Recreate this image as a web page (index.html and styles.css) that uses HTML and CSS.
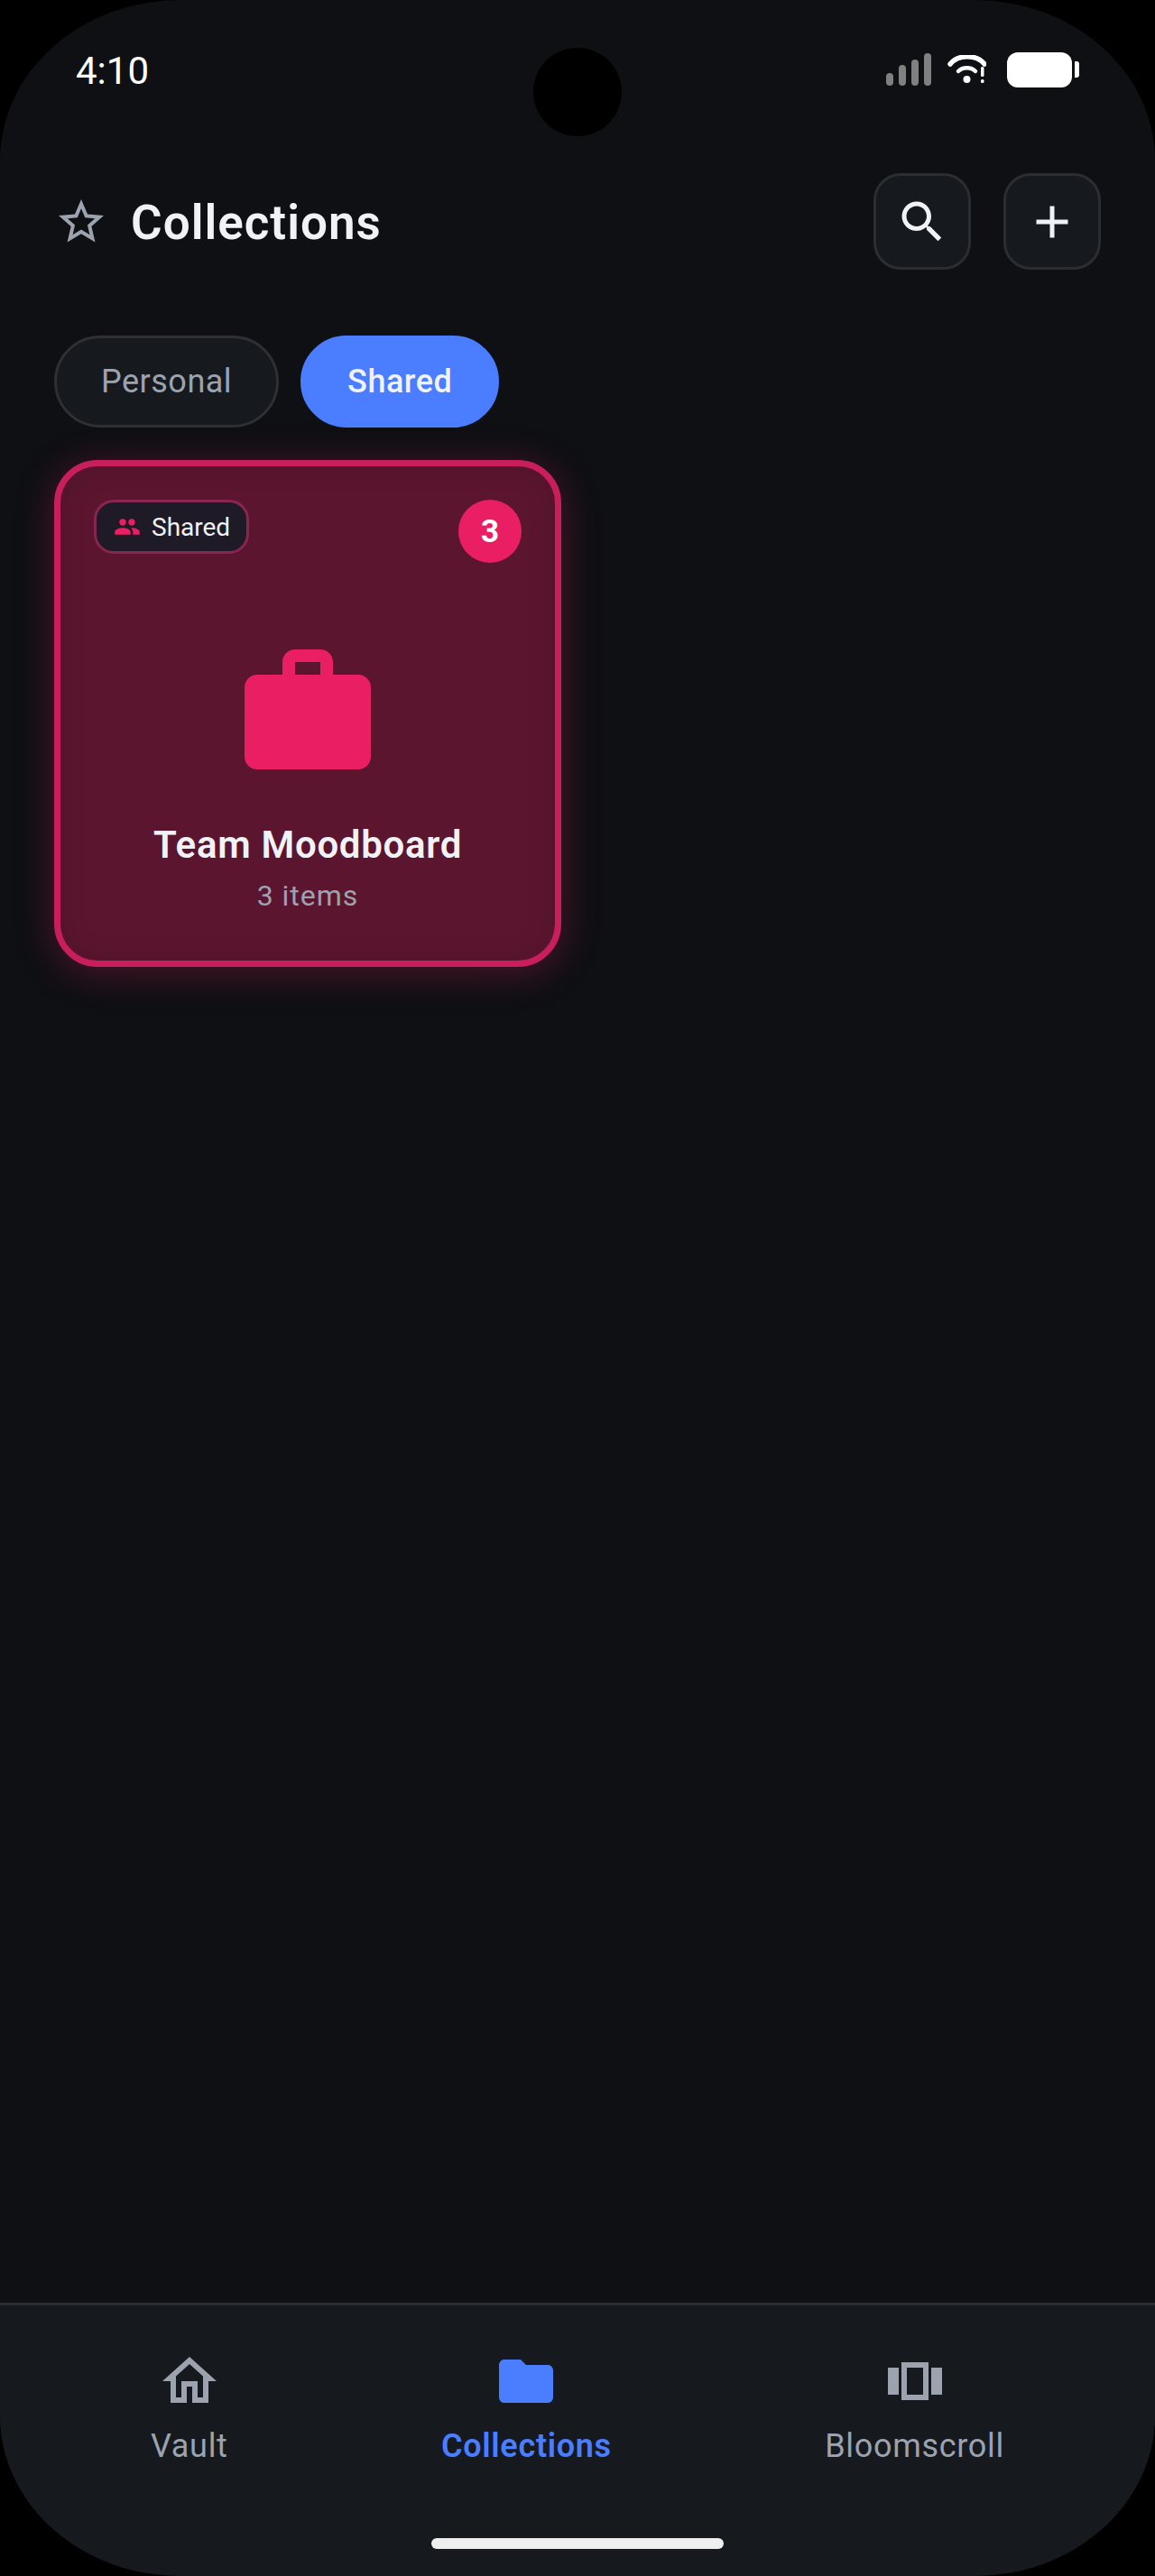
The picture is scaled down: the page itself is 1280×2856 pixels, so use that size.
FILE: index.html
```html
<!DOCTYPE html>
<html lang="en">
<head>
  <meta charset="UTF-8" />
  <meta name="viewport" content="width=device-width, initial-scale=1" />
  <title>Collections</title>
  <link rel="stylesheet" href="styles.css">
</head>
<body>
  <div class="phone">
    <div class="camera"></div>

    <div class="status-bar">
      <span class="time">4:10</span>
      <div class="status-icons">
        <div class="signal">
          <span class="bar bar-1"></span>
          <span class="bar bar-2"></span>
          <span class="bar bar-3"></span>
          <span class="bar bar-4"></span>
        </div>
        <svg class="wifi" viewBox="0 0 43 32" width="43" height="32">
          <path d="M3 10C12 -1 32 -1 41 10" fill="none" stroke="#fff" stroke-width="5.5" stroke-linecap="round"/>
          <path d="M12 18C17 13 26 13 31 18" fill="none" stroke="#fff" stroke-width="4.5" stroke-linecap="round"/>
          <circle cx="21.5" cy="27" r="4" fill="#fff"/>
          <rect x="37" y="13" width="3.5" height="11" rx="1.5" fill="#fff"/>
          <rect x="37" y="27" width="3.5" height="4" rx="1.5" fill="#fff"/>
        </svg>
        <div class="battery">
          <div class="battery-body"></div>
          <div class="battery-cap"></div>
        </div>
      </div>
    </div>

    <header class="header">
      <div class="header-title">
        <svg class="icon-star" viewBox="0 0 24 24"><path d="M22 9.24l-7.19-.62L12 2 9.19 8.63 2 9.24l5.46 4.73L5.82 21 12 17.27 18.18 21l-1.63-7.03L22 9.24zM12 15.4l-3.76 2.27 1-4.28-3.32-2.88 4.38-.38L12 6.1l1.71 4.04 4.38.38-3.32 2.88 1 4.28L12 15.4z"/></svg>
        <h1>Collections</h1>
      </div>
      <div class="header-actions">
        <button class="icon-btn" type="button">
          <svg viewBox="0 0 24 24"><path d="M15.5 14h-.79l-.28-.27C15.41 12.59 16 11.11 16 9.5 16 5.91 13.09 3 9.5 3S3 5.91 3 9.5 5.91 16 9.5 16c1.61 0 3.09-.59 4.23-1.57l.27.28v.79l5 4.99L20.49 19l-4.99-5zm-6 0C7.01 14 5 11.99 5 9.5S7.01 5 9.5 5 14 7.01 14 9.5 11.99 14 9.5 14z"/></svg>
        </button>
        <button class="icon-btn" type="button">
          <svg viewBox="0 0 24 24"><path d="M19 13h-6v6h-2v-6H5v-2h6V5h2v6h6v2z"/></svg>
        </button>
      </div>
    </header>

    <div class="tabs">
      <button class="tab" type="button">Personal</button>
      <button class="tab tab-active" type="button">Shared</button>
    </div>

    <main class="grid">
      <div class="card">
        <div class="card-top">
          <div class="shared-badge">
            <svg viewBox="0 0 24 24"><path d="M16 11c1.66 0 2.99-1.34 2.99-3S17.66 5 16 5c-1.66 0-3 1.34-3 3s1.34 3 3 3zm-8 0c1.66 0 2.99-1.34 2.99-3S9.66 5 8 5C6.34 5 5 6.34 5 8s1.34 3 3 3zm0 2c-2.33 0-7 1.17-7 3.5V19h14v-2.5c0-2.33-4.67-3.5-7-3.5zm8 0c-.29 0-.62.02-.97.05 1.16.84 1.97 1.97 1.97 3.45V19h6v-2.5c0-2.33-4.67-3.5-7-3.5z"/></svg>
            <span>Shared</span>
          </div>
          <div class="count">3</div>
        </div>
        <svg class="card-icon" viewBox="0 0 24 24"><path d="M20 6h-4V4c0-1.11-.89-2-2-2h-4c-1.11 0-2 .89-2 2v2H4c-1.11 0-1.99.89-1.99 2L2 19c0 1.11.89 2 2 2h16c1.11 0 2-.89 2-2V8c0-1.11-.89-2-2-2zm-6 0h-4V4h4v2z"/></svg>
        <div class="card-title">Team Moodboard</div>
        <div class="card-sub">3 items</div>
      </div>
    </main>

    <nav class="nav">
      <div class="nav-item">
        <svg viewBox="0 0 24 24"><path d="M12 5.69l5 4.5V18h-2v-6H9v6H7v-7.81l5-4.5M12 3L2 12h3v8h6v-6h2v6h6v-8h3L12 3z"/></svg>
        <span>Vault</span>
      </div>
      <div class="nav-item nav-active">
        <svg viewBox="0 0 24 24"><path d="M10 4H4c-1.1 0-1.99.9-1.99 2L2 18c0 1.1.9 2 2 2h16c1.1 0 2-.9 2-2V8c0-1.1-.9-2-2-2h-8l-2-2z"/></svg>
        <span>Collections</span>
      </div>
      <div class="nav-item">
        <svg viewBox="0 0 24 24"><path d="M2 7h4v10H2V7zm5 12h10V5H7v14zM9 7h6v10H9V7zm9 0h4v10h-4V7z"/></svg>
        <span>Bloomscroll</span>
      </div>
      <div class="home-indicator"></div>
    </nav>
  </div>
</body>
</html>
```

FILE: styles.css
```css
* {
  box-sizing: border-box;
}
body {
  margin: 0;
  background: #000;
  font-family: Roboto, 'Liberation Sans', sans-serif;
}
.phone {
  position: relative;
  width: 1280px;
  height: 2856px;
  display: flex;
  flex-direction: column;
  overflow: hidden;
  background: #0e1013;
  border-radius: 200px / 178px;
}
.camera {
  position: absolute;
  top: 53px;
  left: 591px;
  width: 98px;
  height: 98px;
  border-radius: 50%;
  background: #000;
}

/* Status bar */
.status-bar {
  height: 154px;
  flex-shrink: 0;
  display: flex;
  justify-content: space-between;
  align-items: center;
  padding: 0 84px 0 84px;
}
.time {
  margin-top: 3px;
  font-size: 42px;
  color: #fff;
  line-height: 48px;
}
.status-icons {
  display: flex;
  align-items: center;
}
.signal {
  display: flex;
  align-items: flex-end;
  gap: 6px;
  height: 36px;
  margin-right: 18px;
}
.bar {
  width: 8px;
  border-radius: 4px;
  background: #808080;
}
.bar-1 { height: 14px; }
.bar-2 { height: 23px; }
.bar-3 { height: 29px; }
.bar-4 { height: 36px; }
.wifi {
  margin-right: 23px;
}
.battery {
  display: flex;
  align-items: center;
  gap: 3px;
}
.battery-body {
  width: 72px;
  height: 39px;
  border-radius: 12px;
  background: #fff;
}
.battery-cap {
  width: 5px;
  height: 18px;
  border-radius: 0 3px 3px 0;
  background: #fff;
}

/* Header */
.header {
  margin-top: 38px;
  padding: 0 60px;
  height: 107px;
  flex-shrink: 0;
  display: flex;
  justify-content: space-between;
  align-items: center;
}
.header-title {
  display: flex;
  align-items: center;
  gap: 25px;
}
.icon-star {
  width: 60px;
  height: 60px;
  fill: #9ca3af;
}
h1 {
  margin: 3px 0 0;
  font-size: 53px;
  font-weight: 600;
  letter-spacing: 1px;
  color: #f0f2f5;
}
.header-actions {
  display: flex;
  gap: 36px;
}
.icon-btn {
  width: 108px;
  height: 107px;
  padding: 0;
  display: flex;
  align-items: center;
  justify-content: center;
  background: #161a1f;
  border: 3px solid #2a2d31;
  border-radius: 30px;
}
.icon-btn svg {
  width: 60px;
  height: 60px;
  fill: #f0f2f5;
}

/* Tabs */
.tabs {
  margin-top: 73px;
  padding: 0 60px;
  display: flex;
  gap: 24px;
  flex-shrink: 0;
}
.tab {
  height: 102px;
  padding: 0 49px;
  border: 3px solid #2e3033;
  border-radius: 51px;
  background: #161a1f;
  color: #9ca3af;
  font-family: inherit;
  font-size: 36px;
  letter-spacing: 0.5px;
}
.tab-active {
  border-color: #4a7dff;
  background: #4a7dff;
  color: #f0f2f5;
  font-weight: 500;
}

/* Card grid */
.grid {
  flex: 1;
  margin-top: 36px;
  padding: 0 60px;
  display: grid;
  grid-template-columns: repeat(2, 1fr);
  grid-auto-rows: 562px;
  gap: 36px;
}
.card {
  display: flex;
  flex-direction: column;
  align-items: center;
  padding: 37px;
  border: 7px solid #c81e5c;
  border-radius: 48px;
  background: #5b152f;
  box-shadow: 0 6px 44px rgba(233, 30, 99, 0.3), inset 0 0 30px rgba(15, 17, 20, 0.12);
}
.card-top {
  width: 100%;
  display: flex;
  justify-content: space-between;
  align-items: flex-start;
}
.shared-badge {
  height: 60px;
  display: flex;
  align-items: center;
  gap: 12px;
  padding: 0 18px 0 19px;
  border: 3px solid #8a2450;
  border-radius: 22px;
  background: #1f1b26;
  color: #f0f2f5;
  font-size: 28px;
}
.shared-badge svg {
  width: 30px;
  height: 30px;
  fill: #e91e63;
}
.count {
  width: 70px;
  height: 70px;
  display: flex;
  align-items: center;
  justify-content: center;
  border-radius: 50%;
  background: #e91e63;
  color: #fff;
  font-size: 35px;
  font-weight: 700;
}
.card-icon {
  width: 168px;
  height: 168px;
  margin-top: 82px;
  fill: #e91e63;
  flex-shrink: 0;
}
.card-title {
  margin-top: 38px;
  font-size: 42px;
  line-height: 50px;
  font-weight: 600;
  letter-spacing: 0.7px;
  color: #f0f2f5;
}
.card-sub {
  margin-top: 11px;
  font-size: 32px;
  line-height: 40px;
  letter-spacing: 1px;
  color: #9ca3af;
}

/* Bottom nav */
.nav {
  position: relative;
  height: 303px;
  flex-shrink: 0;
  display: flex;
  justify-content: space-between;
  align-items: flex-start;
  padding: 48px 167px 0;
  background: #161a1f;
  border-top: 3px solid #2a2d31;
}
.nav-item {
  display: flex;
  flex-direction: column;
  align-items: center;
  gap: 15px;
  color: #9ca3af;
  font-size: 36px;
  line-height: 42px;
  letter-spacing: 0.7px;
}
.nav-item svg {
  width: 72px;
  height: 72px;
  fill: #9ca3af;
}
.nav-active {
  color: #4a7dff;
  font-weight: 600;
}
.nav-active svg {
  fill: #4a7dff;
}
.home-indicator {
  position: absolute;
  left: 478px;
  bottom: 30px;
  width: 324px;
  height: 12px;
  border-radius: 6px;
  background: #eeeeee;
}
```
